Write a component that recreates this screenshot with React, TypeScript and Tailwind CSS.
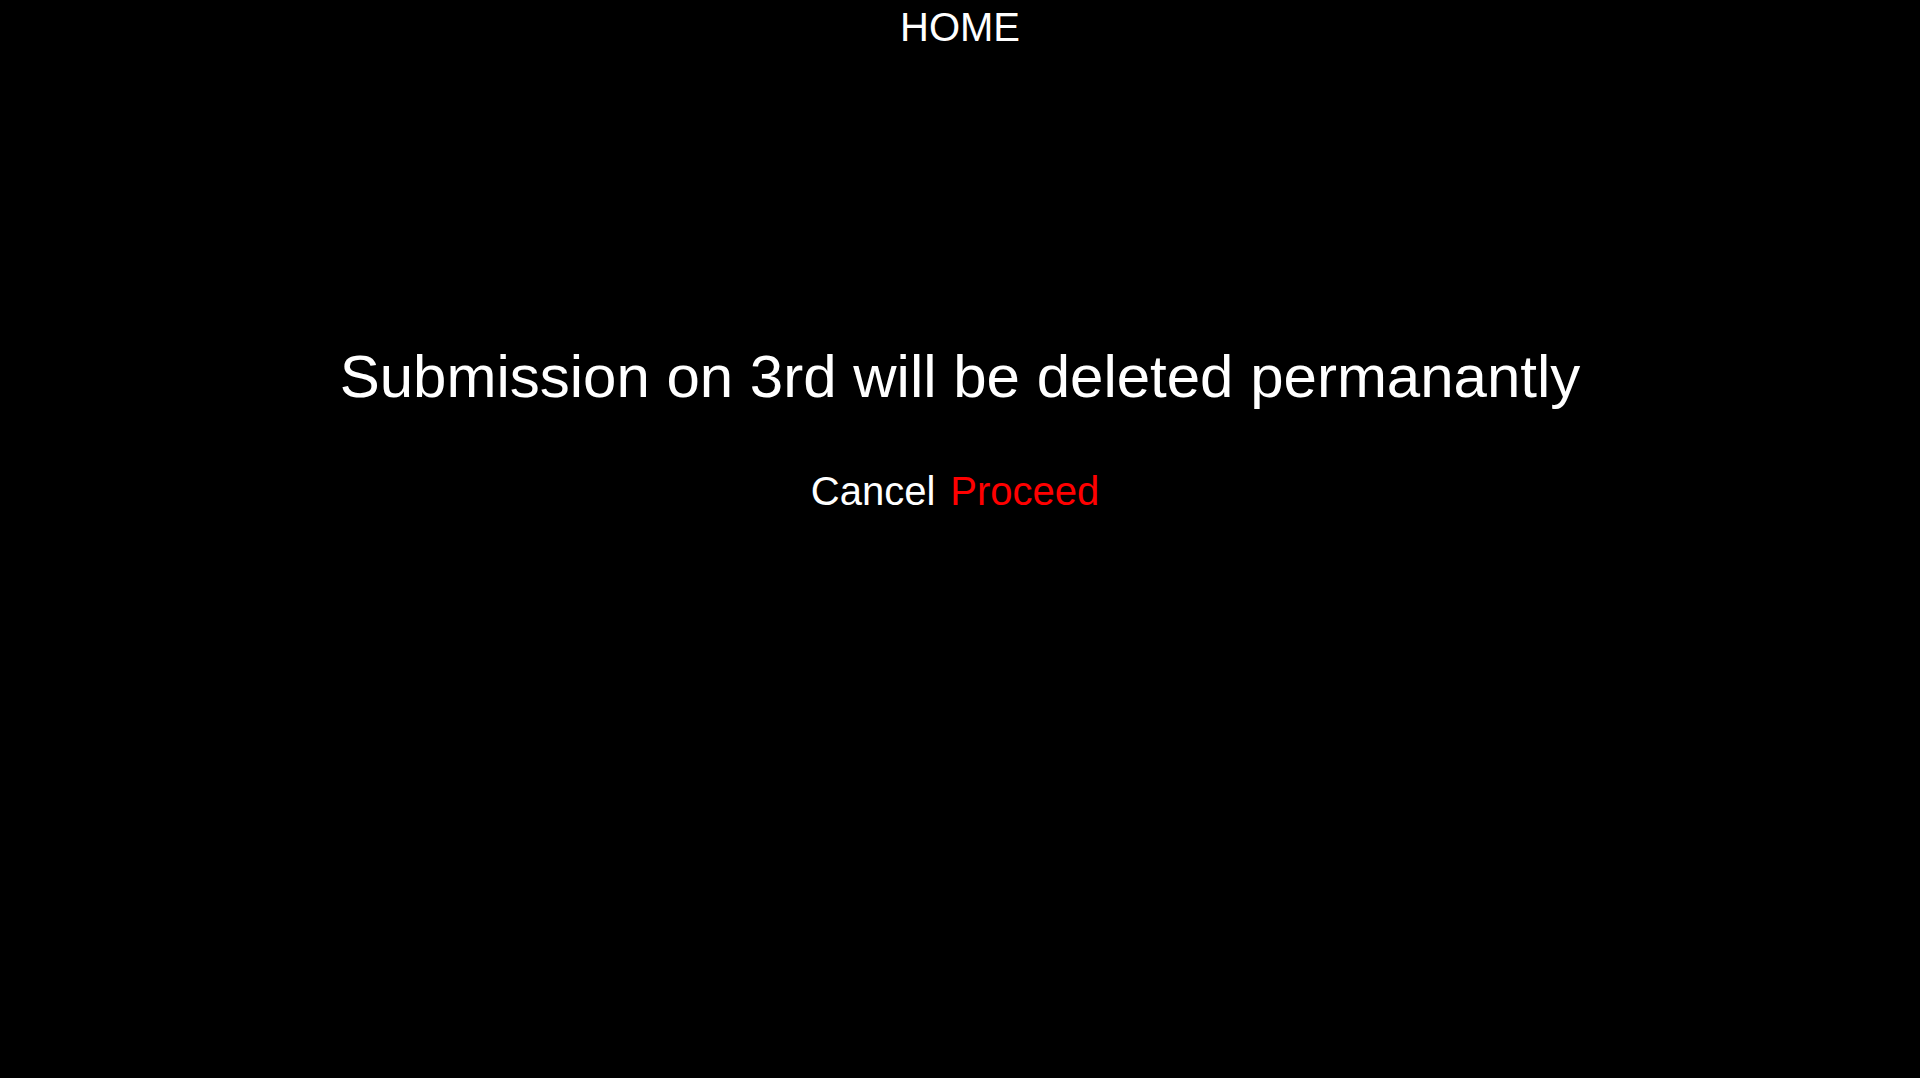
const App = () => {
	return (
		<div className="min-h-screen w-full bg-black text-white font-['Liberation_Sans',Arial,sans-serif]">
			<header className="flex justify-center pt-[4px]">
				<a href="#" className="text-[40px] leading-[1.15]">
					HOME
				</a>
			</header>
			<main className="flex flex-col items-center pt-[292px]">
				<h1 className="text-[60px] leading-[1.15]">
					Submission on 3rd will be deleted permanantly
				</h1>
				<div className="flex gap-[15px] mt-[57px] mr-[10px] text-[40px] leading-[1.15]">
					<button className="text-white">Cancel</button>
					<button className="text-[#ff0000]">Proceed</button>
				</div>
			</main>
		</div>
	);
};

export default App;
